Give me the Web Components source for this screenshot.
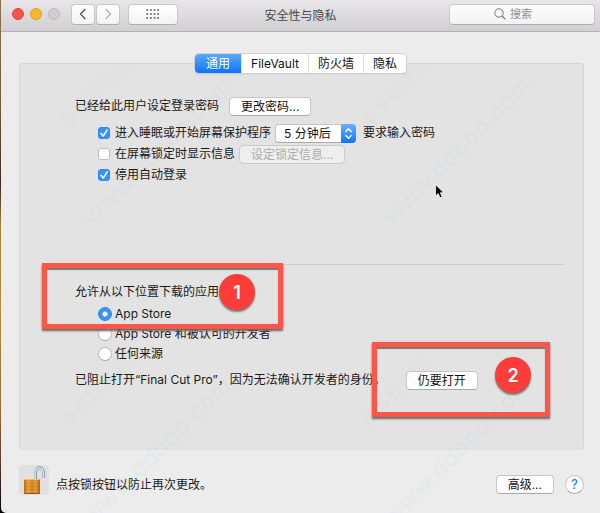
<!DOCTYPE html>
<html lang="zh-CN">
<head>
<meta charset="utf-8">
<title>安全性与隐私</title>
<style>
  body {
    margin: 0;
    background: linear-gradient(#8a734c, #755b34 20%, #3c2b26 36%, #a8812f 44%, #b58d35 60%, #a06a35 80%, #4a2f28 92%, #000);
    font: 12px/20px Inter, "Noto Sans CJK SC", sans-serif;
    color: #1a1a1a;
  }
</style>
</head>
<body>
<mac-window>
  <title-bar slot="bar">安全性与隐私</title-bar>
  <tab-strip slot="tabs"></tab-strip>
  <login-settings></login-settings>
  <download-settings></download-settings>
  <mouse-pointer slot="over" style="left: 415px; top: 120px"></mouse-pointer>
  <step-frame slot="over" number="1" style="left: 22px; top: 199px; width: 241px; height: 66px; --badge-x: 172px; --badge-y: 6px"></step-frame>
  <step-frame slot="over" number="2" style="left: 352px; top: 278px; width: 178px; height: 75px; --badge-x: 118px; --badge-y: 10px"></step-frame>
  <window-footer slot="footer">点按锁按钮以防止再次更改。</window-footer>
</mac-window>

<script>
const define = (name, html, setup) => {
  customElements.define(name, class extends HTMLElement {
    constructor () {
      super()
      this.attachShadow({ mode: 'open' }).innerHTML = html
    }

    connectedCallback () {
      if (setup) setup(this, this.shadowRoot)
    }
  })
}

define('mac-button', `
  <style>
    :host { display: inline-flex; }
    button {
      box-sizing: border-box;
      height: 19px;
      padding: 0 11px;
      border: 1px solid #c6c6c6;
      border-bottom-color: #aaa;
      border-radius: 4px;
      background: #fff;
      color: #111;
      font: inherit;
      line-height: 17px;
      white-space: nowrap;
    }
    button:disabled {
      background: #eee;
      border-color: #cbcbcb;
      color: #adadad;
    }
  </style>
  <button type="button"><slot></slot></button>
`, (host, root) => {
  root.querySelector('button').disabled = host.hasAttribute('disabled')
})

define('mac-check', `
  <style>
    :host { display: inline-flex; }
    label { display: flex; align-items: center; gap: 5px; white-space: nowrap; }
    .box { display: grid; }
    input, svg { grid-area: 1 / 1; }
    input {
      appearance: none;
      box-sizing: border-box;
      width: 12px;
      height: 12px;
      margin: 0;
      border: 1px solid #bdbdbd;
      border-radius: 3px;
      background: #fff;
    }
    input:checked { background: #3693f8; border-color: #2e88ee; }
    svg { width: 12px; height: 12px; visibility: hidden; pointer-events: none; }
    input:checked + svg { visibility: visible; }
  </style>
  <label>
    <span class="box">
      <input type="checkbox">
      <svg viewBox="0 0 12 12"><path d="M3 6.4 5.2 9 9.2 2.8" fill="none" stroke="#fff" stroke-width="1.5" stroke-linecap="round" stroke-linejoin="round"/></svg>
    </span>
    <slot></slot>
  </label>
`, (host, root) => {
  root.querySelector('input').checked = host.hasAttribute('checked')
})

define('mac-select', `
  <style>
    :host {
      display: inline-grid;
      grid-template-columns: 1fr 15px;
      box-sizing: border-box;
      width: 81px;
      height: 19px;
    }
    select {
      grid-area: 1 / 1 / 2 / 3;
      appearance: none;
      box-sizing: border-box;
      width: 100%;
      padding: 0 8px;
      border: 1px solid #c6c6c6;
      border-bottom-color: #aaa;
      border-radius: 4px;
      background: #fff;
      color: #111;
      font: inherit;
      line-height: 17px;
    }
    svg {
      grid-area: 1 / 2;
      width: 15px;
      height: 19px;
      border-radius: 0 4px 4px 0;
      background: linear-gradient(#69b1fa, #0d75fd);
      pointer-events: none;
      z-index: 1;
    }
  </style>
  <select aria-label="要求输入密码的时间"><option>5 分钟后</option></select>
  <svg viewBox="0 0 15 19"><path d="M4.8 7.6 7.5 4.8 10.2 7.6M4.8 11.4 7.5 14.2 10.2 11.4" fill="none" stroke="#fff" stroke-width="1.4" stroke-linecap="round" stroke-linejoin="round"/></svg>
`)

define('title-bar', `
  <style>
    :host {
      display: grid;
      grid-template-columns: 1fr auto 1fr;
      align-items: center;
      box-sizing: border-box;
      height: 32px;
      padding: 0 5px 3px;
      border-bottom: 1px solid #b3b1b3;
      background: linear-gradient(#e8e6e8, #d1cfd1);
      color: #4a4a4a;
    }
    .left, .lights, .nav { display: flex; align-items: center; }
    .lights { gap: 6px; margin: 0 11px 0 6px; }
    .nav { gap: 1px; margin-right: 8px; }
    button { padding: 0; box-sizing: border-box; }
    .lights button {
      width: 12px;
      height: 12px;
      border: 1px solid #dd4742;
      border-radius: 50%;
      background: #f4544d;
    }
    .lights .min { background: #fbb82c; border-color: #dd9f28; }
    .lights .max { background: #cfcdcf; border-color: #bbb9bb; }
    .tool {
      display: grid;
      place-items: center;
      width: 24px;
      height: 21px;
      border: 1px solid #cac8ca;
      border-bottom-color: #b0aeb0;
      border-radius: 4px;
      background: linear-gradient(#fff, #f3f3f3);
    }
    .all { width: 50px; }
    h1 { margin: 0; padding-top: 3px; font: inherit; }
    .search {
      justify-self: end;
      display: flex;
      align-items: center;
      gap: 4px;
      box-sizing: border-box;
      width: 146px;
      height: 21px;
      padding-left: 44px;
      border: 1px solid #cac8ca;
      border-bottom-color: #b0aeb0;
      border-radius: 4px;
      background: linear-gradient(#fcfcfc, #f3f3f3);
    }
    input {
      flex: 1;
      min-width: 0;
      padding: 0;
      border: 0;
      outline: 0;
      background: none;
      font: inherit;
      font-size: 11px;
    }
    input::placeholder { color: #8f8f8f; opacity: 1; }
  </style>
  <div class="left">
    <div class="lights">
      <button type="button" aria-label="关闭"></button>
      <button type="button" class="min" aria-label="最小化"></button>
      <button type="button" class="max" aria-label="缩放" disabled></button>
    </div>
    <div class="nav">
      <button type="button" class="tool" aria-label="后退">
        <svg width="8" height="12" viewBox="0 0 8 12"><path d="M6.3 1 1.5 6 6.3 11" fill="none" stroke="#555" stroke-width="1.3"/></svg>
      </button>
      <button type="button" class="tool" aria-label="前进" disabled>
        <svg width="8" height="12" viewBox="0 0 8 12"><path d="M1.7 1 6.5 6 1.7 11" fill="none" stroke="#b3b3b3" stroke-width="1.3"/></svg>
      </button>
    </div>
    <button type="button" class="tool all" aria-label="显示全部">
      <svg width="14" height="10" viewBox="0 0 14 10"><path d="M.5 1H14M.5 5H14M.5 9H14" fill="none" stroke="#484848" stroke-width="1.6" stroke-dasharray="1.6 2"/></svg>
    </button>
  </div>
  <h1><slot></slot></h1>
  <label class="search">
    <svg width="12" height="12" viewBox="0 0 12 12"><circle cx="5" cy="5" r="4.2" fill="none" stroke="#777"/><path d="M8 8 11.4 11.4" stroke="#777" stroke-width="1.2"/></svg>
    <input type="search" placeholder="搜索" aria-label="搜索">
  </label>
`)

define('tab-strip', `
  <style>
    :host {
      display: flex;
      box-sizing: border-box;
      height: 19px;
      border-radius: 4px;
      background: #fff;
      box-shadow: 0 0 0 1px #cfcfcf, 0 1px 1px #999;
      overflow: hidden;
    }
    button {
      padding: 0 9px;
      border: 0;
      border-right: 1px solid #e0e0e0;
      background: none;
      color: #111;
      font: inherit;
      line-height: 19px;
    }
    button:last-child { border: 0; }
    button[aria-selected="true"] {
      padding: 0 11px;
      background: linear-gradient(#5eaaf8, #0a74fd);
      color: #fff;
    }
  </style>
  <button type="button" role="tab" aria-selected="true">通用</button>
  <button type="button" role="tab" aria-selected="false">FileVault</button>
  <button type="button" role="tab" aria-selected="false">防火墙</button>
  <button type="button" role="tab" aria-selected="false">隐私</button>
`, (host, root) => {
  const tabs = root.querySelectorAll('button')
  host.setAttribute('role', 'tablist')
  tabs.forEach(tab => {
    tab.onclick = () => tabs.forEach(t => t.setAttribute('aria-selected', t === tab))
  })
})

define('login-settings', `
  <style>
    :host {
      display: flex;
      flex-direction: column;
      gap: 1px;
      padding: 32px 0 79px 55px;
      white-space: nowrap;
    }
    .row { display: flex; align-items: center; height: 20px; gap: 4px; }
    .password { gap: 10px; margin-bottom: 6px; }
    .sub { margin-left: 23px; }
    mac-select { margin-right: 3px; }
  </style>
  <div class="row password"><span>已经给此用户设定登录密码</span><mac-button>更改密码...</mac-button></div>
  <div class="row sub"><mac-check checked>进入睡眠或开始屏幕保护程序</mac-check><mac-select></mac-select><span>要求输入密码</span></div>
  <div class="row sub"><mac-check>在屏幕锁定时显示信息</mac-check><mac-button disabled>设定锁定信息...</mac-button></div>
  <div class="row sub"><mac-check checked>停用自动登录</mac-check></div>
`)

define('download-settings', `
  <style>
    :host {
      display: block;
      margin: 0 20px 0 55px;
      padding-top: 17px;
      border-top: 1px solid #cbcbcb;
      white-space: nowrap;
    }
    fieldset { margin: 0; padding: 0; border: 0; }
    legend { padding: 0; margin-bottom: 2px; }
    fieldset label { display: flex; align-items: center; gap: 3px; margin-left: 23px; }
    input {
      appearance: none;
      box-sizing: border-box;
      width: 14px;
      height: 14px;
      margin: 0;
      border: 1px solid #bdbdbd;
      border-bottom-color: #a8a8a8;
      border-radius: 50%;
      background: #fff;
    }
    input:checked {
      border-color: #2e88ee;
      background: radial-gradient(circle, #fff 2px, #3693f8 3px);
    }
    .blocked { display: flex; align-items: center; gap: 20px; margin-top: 6px; }
  </style>
  <fieldset>
    <legend>允许从以下位置下载的应用</legend>
    <label><input type="radio" name="source" checked>App Store</label>
    <label><input type="radio" name="source">App Store 和被认可的开发者</label>
    <label><input type="radio" name="source">任何来源</label>
  </fieldset>
  <div class="blocked"><span>已阻止打开“Final Cut Pro”，因为无法确认开发者的身份。</span><mac-button>仍要打开</mac-button></div>
`)

define('step-frame', `
  <style>
    :host {
      position: absolute;
      box-sizing: border-box;
      border: 5px solid #fb5647;
      box-shadow: 0 2px 2px #666, inset 0 2px 1px #777;
      pointer-events: none;
    }
    span {
      position: absolute;
      left: var(--badge-x);
      top: var(--badge-y);
      width: 36px;
      height: 36px;
      border-radius: 50%;
      background: #fd3d3a;
      box-shadow: 0 2px 2px #777;
      color: #fff;
      font-size: 18px;
      font-weight: 600;
      line-height: 38px;
      text-align: center;
    }
  </style>
  <span></span>
`, (host, root) => {
  root.querySelector('span').textContent = host.getAttribute('number')
})

define('mouse-pointer', `
  <style>
    :host { position: absolute; pointer-events: none; }
    svg { display: block; }
  </style>
  <svg width="10" height="15" viewBox="0 0 10 15"><path d="M.6.8V12L3.2 9.6 5 13.8 7.2 12.9 5.4 8.8H9Z" fill="#000" stroke="#fff" stroke-width=".8"/></svg>
`)

define('window-footer', `
  <style>
    :host { display: flex; align-items: center; padding: 15px 16px 18px 18px; }
    .lock {
      width: 30px;
      height: 30px;
      margin-right: 7px;
      padding: 0;
      border: 0;
      border-radius: 4px;
      background: #e0e0e0;
    }
    svg { display: block; }
    p { flex: 1; margin: 10px 0 0; }
    .actions { display: flex; align-items: center; gap: 11px; margin-top: 8px; }
    .help {
      width: 19px;
      height: 19px;
      padding: 0;
      border: 1px solid #c4c4c4;
      border-bottom-color: #aaa;
      border-radius: 50%;
      background: #fff;
      color: #1a82fb;
      font: inherit;
      font-size: 13px;
      font-weight: 500;
      line-height: 17px;
    }
  </style>
  <button type="button" class="lock" aria-label="锁定">
    <svg width="30" height="30" viewBox="0 0 30 30">
      <defs>
        <linearGradient id="brass">
          <stop offset="0" stop-color="#b96a1a"/>
          <stop offset=".25" stop-color="#eda23c"/>
          <stop offset=".5" stop-color="#d4832a"/>
          <stop offset=".75" stop-color="#e99a36"/>
          <stop offset="1" stop-color="#a85c15"/>
        </linearGradient>
      </defs>
      <path d="M16.5 14V8.5C16.5 .8 24.6 .8 24.6 8.5V13" fill="none" stroke="#84939e" stroke-width="3"/>
      <path d="M16.2 14V8.5C16.2 1.2 24.4 1.2 24.4 8.5V13" fill="none" stroke="#dce6ed" stroke-width="1.6"/>
      <rect x="5" y="14" width="16" height="15" rx="1" fill="url(#brass)"/>
      <path d="M5.5 14.5H20.5" stroke="#f6c26c"/>
      <path d="M5 18.5H21M5 21.5H21M5 24.5H21" stroke="#b4691c" stroke-opacity=".25"/>
      <path d="M5.5 28.5H20.5" stroke="#8d4c10"/>
    </svg>
  </button>
  <p><slot></slot></p>
  <div class="actions">
    <mac-button>高级...</mac-button>
    <button type="button" class="help" aria-label="帮助">?</button>
  </div>
`)

define('water-mark', `
  <style>
    :host { position: absolute; inset: 0; overflow: hidden; pointer-events: none; }
    div { display: grid; grid-template-columns: repeat(2, 300px); }
    svg { display: block; }
    text { fill: #5a78a0; fill-opacity: .05; }
  </style>
  <div></div>
`, (host, root) => {
  const tile = `
    <svg width="300" height="300" viewBox="0 0 300 300" aria-hidden="true">
      <text transform="translate(67 129) rotate(-45)" font-size="18" font-weight="500">多多软件站</text>
      <text transform="translate(92 227) rotate(-45)" font-size="24" font-weight="600">www.ddooo.com</text>
    </svg>`
  root.querySelector('div').innerHTML = tile.repeat(4)
})

define('mac-window', `
  <style>
    :host {
      position: relative;
      display: flex;
      flex-direction: column;
      min-height: 100vh;
      margin-left: 1px;
      border-bottom-left-radius: 5px;
      background: #ececec;
      overflow: hidden;
    }
    .tabs {
      display: flex;
      justify-content: center;
      margin: 22px 0 -10px;
      z-index: 1;
    }
    main {
      position: relative;
      flex: 1;
      margin: 0 16px 0 18px;
      border: 1px solid #d6d6d6;
      border-bottom-color: #dedede;
      border-radius: 4px;
      background: #e3e3e3;
    }
  </style>
  <slot name="bar"></slot>
  <div class="tabs"><slot name="tabs"></slot></div>
  <main>
    <slot></slot>
    <slot name="over"></slot>
  </main>
  <slot name="footer"></slot>
  <water-mark></water-mark>
`)
</script>
</body>
</html>
